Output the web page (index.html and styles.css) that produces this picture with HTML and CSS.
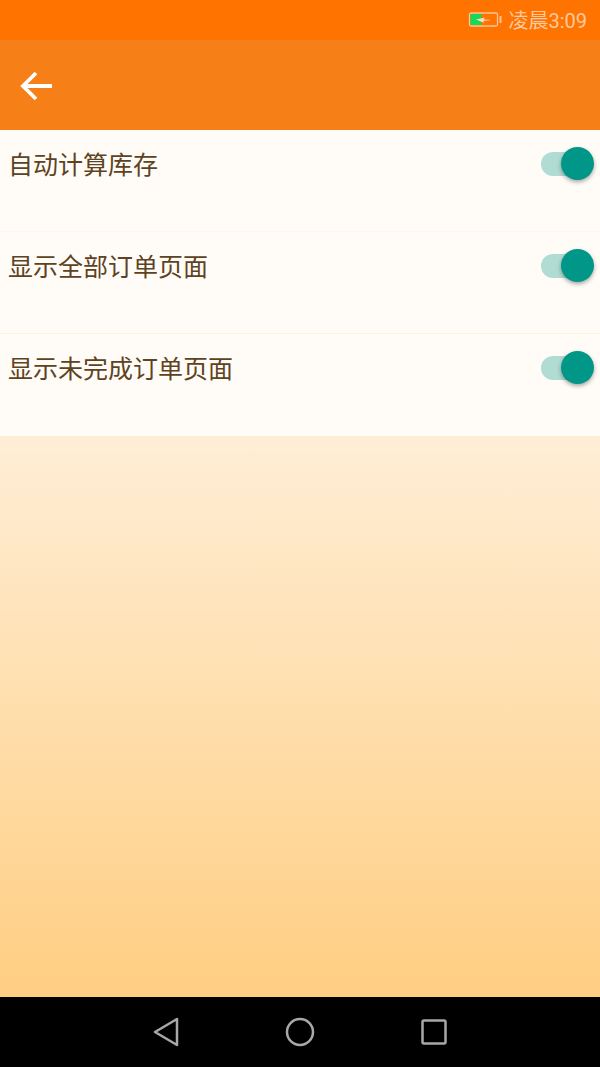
FILE: index.html
```html
<!DOCTYPE html>
<html lang="zh-CN">
<head>
<meta charset="utf-8">
<title>设置</title>
<link rel="stylesheet" href="styles.css">
</head>
<body>
<div class="app">
  <div class="status">
    <svg class="battery" width="34" height="16" viewBox="0 0 34 16">
      <rect x="1.500" y="1" width="28" height="13" rx="1.500" fill="none" stroke="#ffc596" stroke-width="1.300"/>
      <rect x="2.500" y="2" width="11" height="11" fill="#18d858"/>
      <path d="M8 7.500 L17 5.500 L15.500 7.500 L24 8 L15 9 L16.500 11 Z" fill="#ffdcc0"/>
      <rect x="31.500" y="4" width="2" height="7" fill="#ffc596"/>
    </svg>
    <span class="time">凌晨3:09</span>
  </div>
  <div class="toolbar">
    <svg class="back" width="34" height="34" viewBox="0 0 34 34">
      <path d="M3 16 H32 M16 3 L3 16 L16 29" fill="none" stroke="#fff" stroke-width="3.800"/>
    </svg>
  </div>
  <div class="list">
    <div class="row"><span class="label">自动计算库存</span><span class="switch"><span class="track"></span><span class="thumb"></span></span></div>
    <div class="row row-faint"><span class="label">显示全部订单页面</span><span class="switch"><span class="track"></span><span class="thumb"></span></span></div>
    <div class="row"><span class="label">显示未完成订单页面</span><span class="switch"><span class="track"></span><span class="thumb"></span></span></div>
  </div>
  <div class="fill"></div>
  <div class="nav">
    <svg width="26" height="30" viewBox="0 0 26 30"><path d="M2 15 L24 2 V28 Z" fill="none" stroke="#a8a8a8" stroke-width="2.500" stroke-linejoin="round"/></svg>
    <svg width="30" height="30" viewBox="0 0 30 30"><circle cx="15" cy="15" r="13" fill="none" stroke="#a8a8a8" stroke-width="2.500"/></svg>
    <svg width="26" height="26" viewBox="0 0 26 26"><rect x="1.500" y="1.500" width="23" height="23" rx="1.500" fill="none" stroke="#a8a8a8" stroke-width="2.500"/></svg>
  </div>
</div>
</body>
</html>
```
FILE: styles.css
```css
* { box-sizing: border-box; }
html, body { margin: 0; padding: 0; }
body { font-family: "Noto Sans CJK SC", "Noto Sans", sans-serif; }
.app { width: 600px; height: 1067px; display: flex; flex-direction: column; overflow: hidden; background: #fff; }
.status { height: 40px; flex: none; background: #ff7300; display: flex; align-items: center; justify-content: flex-end; padding-right: 13px; gap: 6px; }
.battery { display: block; margin-top: -1px; }
.time { font-family: Roboto, "Noto Sans CJK SC", sans-serif; font-size: 20px; line-height: 40px; color: #ffc99e; position: relative; top: 1px; }
.toolbar { height: 90px; flex: none; background: #f77f17; display: flex; align-items: center; padding-left: 20px; padding-top: 4px; }
.back { display: block; }
.list { flex: none; background: #fffbf6; }
.row { height: 102px; display: flex; justify-content: space-between; align-items: flex-start; padding: 16px 6px 0 8px; border-bottom: 1px solid #fff7e8; }
.row-faint { border-bottom-color: #fff3dc; }
.row:last-child { border-bottom: 0; }
.label { font-size: 25px; line-height: 34px; color: #5d4322; }
.switch { position: relative; display: block; width: 53px; height: 34px; margin-top: 1px; }
.track { position: absolute; left: 0; top: 5px; width: 48px; height: 24px; border-radius: 12px; background: #b0dcd4; }
.thumb { position: absolute; right: 0; top: 0; width: 33px; height: 33px; border-radius: 50%; background: #009688; box-shadow: 0 2px 4px rgba(0,0,0,.35); }
.fill { flex: 1; background: linear-gradient(180deg, #ffeed6 0%, #ffce82 100%); }
.nav { height: 70px; flex: none; background: #000; display: flex; align-items: center; justify-content: center; gap: 106px; padding-right: 1px; }
.nav svg { display: block; }
```
